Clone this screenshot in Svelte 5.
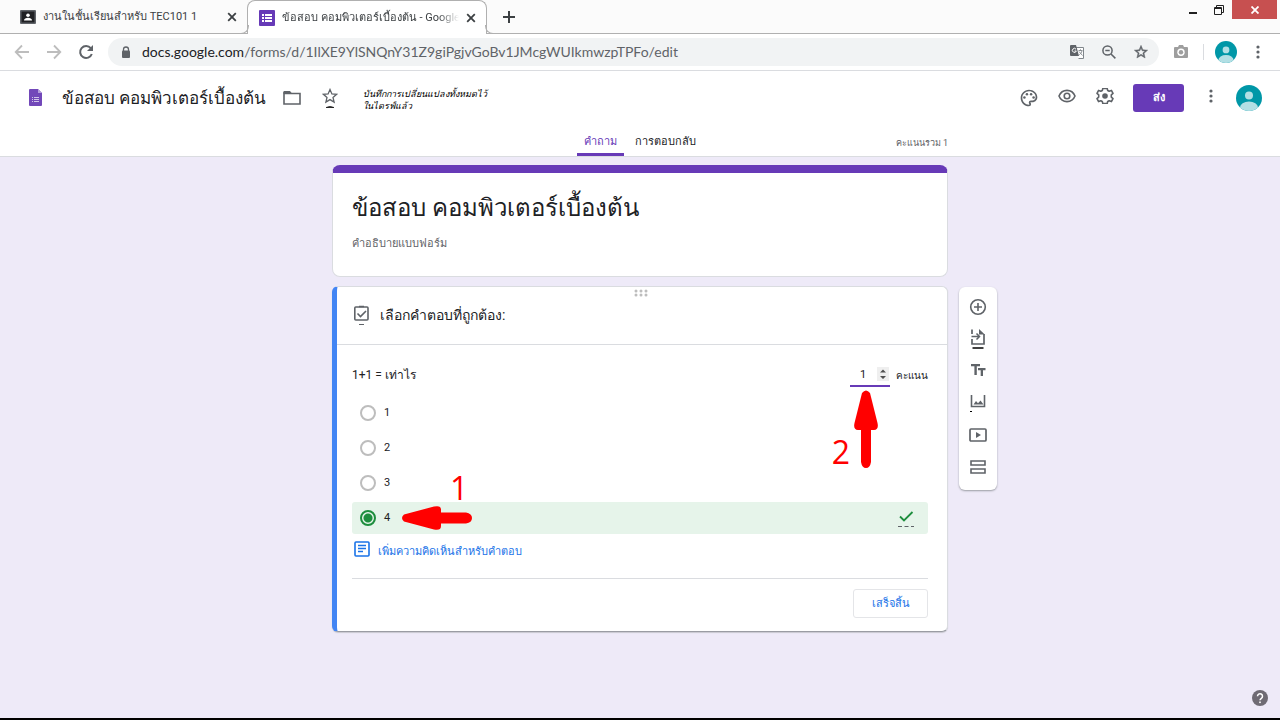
<script lang="ts">
  let answer = $state('4');
  let points = $state(1);
  const choices = ['1', '2', '3', '4'];
</script>

{#snippet avatar(size: number)}
  <svg width={size} height={size} viewBox="0 0 26 26" aria-hidden="true">
    <clipPath id="face{size}"><circle cx="13" cy="13" r="13" /></clipPath>
    <g clip-path="url(#face{size})">
      <rect width="26" height="26" fill="#0097a7" />
      <circle cx="13" cy="10.5" r="4" fill="#b2dfe4" />
      <ellipse cx="13" cy="22.5" rx="9" ry="6" fill="#b2dfe4" />
    </g>
  </svg>
{/snippet}

{#snippet dots()}
  <svg width="16" height="16" viewBox="0 0 16 16" fill="#5f6368" aria-hidden="true">
    <circle cx="8" cy="3" r="1.6" /><circle cx="8" cy="8" r="1.6" /><circle cx="8" cy="13" r="1.6" />
  </svg>
{/snippet}

{#snippet cross()}
  <svg width="10" height="10" viewBox="0 0 10 10" stroke="#3c4043" stroke-width="1.8" aria-hidden="true"><path d="M1.2 1.2l7.6 7.6M8.8 1.2L1.2 8.8" /></svg>
{/snippet}

<div class="page">
  <div class="strip">
    <div class="tab">
      <svg width="16" height="14" viewBox="0 0 16 14" aria-hidden="true">
        <rect width="16" height="14" rx="1" fill="#5f6368" /><rect x="1.5" y="1.5" width="13" height="11" fill="#202124" />
        <circle cx="8" cy="5.3" r="1.8" fill="#fff" /><path d="M4 10.5c0-3.6 8-3.6 8 0z" fill="#fff" />
      </svg>
      <span class="tab-name">งานในชั้นเรียนสำหรับ TEC101 1</span>
      <button class="plain" aria-label="ปิดแท็บ">{@render cross()}</button>
    </div>
    <div class="tab active">
      <svg width="16" height="16" viewBox="0 0 16 16" aria-hidden="true">
        <rect width="16" height="16" rx="1" fill="#673ab7" />
        <path d="M3 4h2v2H3zM6 4h7v2H6zM3 7h2v2H3zM6 7h7v2H6zM3 10h2v2H3zM6 10h7v2H6z" fill="#fff" />
      </svg>
      <span class="tab-name fade">ข้อสอบ คอมพิวเตอร์เบื้องต้น - Google</span>
      <button class="plain" aria-label="ปิดแท็บ">{@render cross()}</button>
    </div>
    <button class="plain add-tab" aria-label="แท็บใหม่">
      <svg width="12" height="12" viewBox="0 0 12 12" stroke="#3c4043" stroke-width="2"><path d="M6 0v12M0 6h12" /></svg>
    </button>
    <div class="window">
      <button class="plain" aria-label="ย่อ"><svg width="10" height="10" viewBox="0 0 10 10"><path d="M1 7h8v2H1z" fill="#202020" /></svg></button>
      <button class="plain" aria-label="คืนค่า"><svg width="10" height="10" viewBox="0 0 10 10" fill="none" stroke="#202020"><path d="M2.5 2V.5h7v7H8" /><path d="M.5 2.5h7v7h-7zM.5 3.5h7" /></svg></button>
      <button class="plain shut" aria-label="ปิด"><svg width="8" height="8" viewBox="0 0 8 8" stroke="#fff" stroke-width="1.8"><path d="M.5.5l7 7M7.5.5l-7 7" /></svg></button>
    </div>
  </div>

  <div class="toolbar">
    <div class="nav">
      <button class="plain" aria-label="กลับ"><svg width="16" height="16" viewBox="0 0 16 16" fill="none" stroke="#bdbdbd" stroke-width="1.8"><path d="M15 8H2M8 1.5L1.7 8 8 14.5" /></svg></button>
      <button class="plain" aria-label="ไปข้างหน้า"><svg width="16" height="16" viewBox="0 0 16 16" fill="none" stroke="#bdbdbd" stroke-width="1.8"><path d="M1 8h13M8 1.5L14.3 8 8 14.5" /></svg></button>
      <button class="plain" aria-label="โหลดใหม่"><svg width="16" height="16" viewBox="0 0 16 16"><path d="M12.8 4.2A6 6 0 1 0 13.8 10" fill="none" stroke="#5f6368" stroke-width="2" /><path d="M15 1v6H9z" fill="#5f6368" /></svg></button>
    </div>
    <div class="omnibox">
      <svg width="10" height="13" viewBox="0 0 10 13" aria-hidden="true"><path d="M2.500 5V3.500a2.500 2.500 0 0 1 5 0V5" fill="none" stroke="#5f6368" stroke-width="1.300" /><rect x="1" y="4.500" width="8" height="7.500" rx="1" fill="#5f6368" /></svg>
      <span class="url"><b>docs.google.com</b>/forms/d/1IlXE9YlSNQnY31Z9giPgjvGoBv1JMcgWUIkmwzpTPFo/edit</span>
      <button class="plain" aria-label="แปลหน้านี้">
        <svg width="14" height="14" viewBox="0 0 14 14"><path d="M5.500 2.500h8v11h-5" fill="#fff" stroke="#80868b" /><path d="M1 0h5l3 11H1a1 1 0 0 1-1-1V1a1 1 0 0 1 1-1z" fill="#5f6368" /><path d="M6 4.200A2 2 0 1 0 6.300 6H4.500" fill="none" stroke="#fff" /><path d="M8.500 5.500h4M10.500 4.300v1.200M12 5.800c-.4 2-1.500 3-2.700 4M9 6.500l3.500 4" fill="none" stroke="#80868b" stroke-width=".9" /></svg>
      </button>
      <button class="plain" aria-label="ซูม"><svg width="14" height="14" viewBox="0 0 14 14" fill="none" stroke="#5f6368" stroke-width="1.500"><circle cx="5.500" cy="5.500" r="4.600" /><path d="M9 9l4.400 4.400M3.300 5.500h4.400" /></svg></button>
      <button class="plain" aria-label="บุ๊กมาร์ก"><svg width="16" height="16" viewBox="0 0 24 24" fill="#5f6368"><path d="M22 9.240l-7.190-.62L12 2 9.190 8.630 2 9.240l5.460 4.730L5.820 21 12 17.270 18.180 21l-1.630-7.030L22 9.240zM12 15.400l-3.760 2.270 1-4.280-3.320-2.880 4.380-.38L12 6.100l1.710 4.040 4.380.38-3.320 2.880 1 4.280L12 15.400z" stroke="#5f6368" stroke-width=".7" /></svg></button>
    </div>
    <div class="chrome-end">
      <button class="plain" aria-label="กล้อง"><svg width="16" height="14" viewBox="0 0 16 14"><path d="M5 2l1-2h4l1 2h3a1 1 0 0 1 1 1v9a1 1 0 0 1-1 1H2a1 1 0 0 1-1-1V3a1 1 0 0 1 1-1z" fill="#9e9e9e" /><circle cx="8" cy="7.200" r="3.700" fill="#fff" /><circle cx="8" cy="7.200" r="2.200" fill="#9e9e9e" /></svg></button>
      <span class="rule"></span>
      <button class="plain" aria-label="โปรไฟล์">{@render avatar(22)}</button>
      <button class="plain menu" aria-label="เมนู">{@render dots()}</button>
    </div>
  </div>

  <header>
    <div class="bar">
      <svg width="13" height="18" viewBox="0 0 13 18" aria-hidden="true"><path d="M1 0h8l4 4v12a1 1 0 0 1-1 1H1a1 1 0 0 1-1-1V1a1 1 0 0 1 1-1z" fill="#7248b9" /><path d="M9 0l4 4H9z" fill="#b39ddb" /><path d="M3 8h1v1H3zM5 8h5v1H5zM3 10h1v1H3zM5 10h5v1H5zM3 12h1v1H3zM5 12h5v1H5z" fill="#d1c4e9" /></svg>
      <h1>ข้อสอบ คอมพิวเตอร์เบื้องต้น</h1>
      <button class="plain tool" aria-label="ย้าย"><svg width="18" height="14" viewBox="0 0 18 14"><path d="M1 2.500h16v10.500H1z" fill="none" stroke="#5f6368" stroke-width="1.600" /><path d="M1 0h6l2 2.500H.2V1z" fill="#5f6368" /></svg></button>
      <button class="plain tool" aria-label="ติดดาว"><svg width="16" height="20" viewBox="0 0 16 20"><path d="M8 1.500l1.900 4.400 4.700.4-3.600 3.100 1.100 4.700L8 11.600l-4.100 2.500L5 9.400 1.400 6.300l4.700-.4z" fill="none" stroke="#5f6368" stroke-width="1.300" /><path d="M4 19.500q4-2 8 0z" fill="#000" stroke="#000" stroke-width=".6" /></svg></button>
      <p class="saved">บันทึกการเปลี่ยนแปลงทั้งหมดไว้<br />ในไดรฟ์แล้ว</p>
      <div class="actions">
        <button class="plain tool" aria-label="ธีม"><svg width="20" height="20" viewBox="0 0 24 24" fill="#5f6368"><path d="M12 22C6.490 22 2 17.510 2 12S6.490 2 12 2s10 4.040 10 9c0 3.310-2.690 6-6 6h-1.770c-.28 0-.5.22-.5.5 0 .12.050.230.130.330.410.470.640 1.060.640 1.670A2.500 2.500 0 0 1 12 22zm0-18c-4.410 0-8 3.590-8 8s3.590 8 8 8c.28 0 .5-.22.5-.5a.54.54 0 0 0-.14-.35c-.41-.46-.63-1.050-.63-1.650a2.500 2.500 0 0 1 2.500-2.500H16c2.210 0 4-1.790 4-4 0-3.860-3.590-7-8-7z" /><circle cx="6.500" cy="11.500" r="1.500" /><circle cx="9.500" cy="7.500" r="1.500" /><circle cx="14.500" cy="7.500" r="1.500" /><circle cx="17.500" cy="11.500" r="1.500" /></svg></button>
        <button class="plain tool raised" aria-label="ดูตัวอย่าง"><svg width="18" height="14" viewBox="0 0 18 14" fill="none" stroke="#5f6368" stroke-width="1.600"><path d="M1 7c3-7.500 13-7.500 16 0-3 7.500-13 7.500-16 0z" /><circle cx="9" cy="7" r="2.800" /></svg></button>
        <button class="plain tool raised" aria-label="การตั้งค่า"><svg width="18" height="16" viewBox="0 1 18 16"><path d="M6.800 1.500h4.400l.5 2 1.500.8 2.200-.9 1.600 3-1.700 1.500v2.200l1.700 1.500-1.600 3-2.200-.9-1.500.8-.5 2H6.800l-.5-2-1.500-.8-2.200.9L1 11.600l1.700-1.500V7.900L1 6.400l1.600-3 2.200.9 1.500-.8z" fill="none" stroke="#5f6368" stroke-width="1.600" stroke-linejoin="round" /><circle cx="9" cy="9" r="2.800" fill="#5f6368" /></svg></button>
        <button class="send">ส่ง</button>
        <button class="plain tool raised" aria-label="เพิ่มเติม">{@render dots()}</button>
        <button class="plain tool" aria-label="บัญชี">{@render avatar(26)}</button>
      </div>
    </div>
    <div class="tabs">
      <nav>
        <a href="#questions" class="current">คำถาม</a>
        <a href="#responses">การตอบกลับ</a>
      </nav>
      <span class="total">คะแนนรวม 1</span>
    </div>
  </header>

  <main>
    <div class="column">
      <section class="card intro">
        <h2>ข้อสอบ คอมพิวเตอร์เบื้องต้น</h2>
        <p>คำอธิบายแบบฟอร์ม</p>
      </section>

      <section class="card question">
        <svg class="grip" width="16" height="8" viewBox="0 0 16 8" fill="#bdbdbd" aria-hidden="true"><circle cx="2" cy="2" r="1.500" /><circle cx="7" cy="2" r="1.500" /><circle cx="12" cy="2" r="1.500" /><circle cx="2" cy="6" r="1.500" /><circle cx="7" cy="6" r="1.500" /><circle cx="12" cy="6" r="1.500" /></svg>
        <div class="lead">
          <svg width="18" height="20" viewBox="0 0 18 20" fill="none" stroke="#5f6368" aria-hidden="true"><rect x="2.800" y="2" width="13.200" height="13" rx="1" stroke-width="1.600" /><path d="M5.500 8.500l3 3L14 6" stroke-width="1.600" /><path d="M7 1.500h5" stroke-width="1.500" /><path d="M7 19.500h5" /></svg>
          <h3>เลือกคำตอบที่ถูกต้อง:</h3>
        </div>
        <div class="body">
          <div class="prompt">
            <span id="prompt">1+1 = เท่าไร</span>
            <label class="score"><input type="number" bind:value={points} min="0" /><span>คะแนน</span></label>
          </div>
          <div class="choices" role="radiogroup" aria-labelledby="prompt">
            {#each choices as choice}
              <label class="choice" class:correct={answer === choice}>
                <input type="radio" name="answer" value={choice} bind:group={answer} />
                <span>{choice}</span>
                {#if answer === choice}
                  <svg width="18" height="18" viewBox="0 0 18 18" fill="none" aria-hidden="true"><path d="M3 7.500l4 4L15.500 3" stroke="#1e8e3e" stroke-width="1.800" /><path d="M1 17.500h16" stroke="#5f6368" stroke-dasharray="4 2.500" /></svg>
                {/if}
              </label>
            {/each}
          </div>
          <button class="plain feedback">
            <svg width="16" height="16" viewBox="0 0 16 16" fill="none" stroke="#1a73e8" stroke-width="1.600" aria-hidden="true"><rect x="1" y="1" width="14" height="14" rx="1" /><path d="M4 4.500h8M4 7.500h8M4 10.500h5" /></svg>
            <span>เพิ่มความคิดเห็นสำหรับคำตอบ</span>
          </button>
          <div class="foot"><button class="done">เสร็จสิ้น</button></div>
        </div>

        <div class="mark choose">
          <span>1</span>
          <svg width="70" height="24" viewBox="0 0 70 24" fill="red" aria-hidden="true"><path d="M2 8.500L32 .5q7-1.500 7 3V6.500h25q6 1 6 5.500t-6 5.500H39V20q0 5-7 3.500L2 15.500q-4-3.500 0-7z" /></svg>
        </div>
        <div class="mark grade">
          <span>2</span>
          <svg width="24" height="78" viewBox="0 0 24 78" fill="red" aria-hidden="true"><path d="M8 3q4-5 8 0l7.500 30q1.500 7-3.500 7H17v32q-1 6-5 6t-5-6V40H4q-5 0-3.500-7z" /></svg>
        </div>
      </section>
    </div>

    <aside>
      <button class="plain" aria-label="เพิ่มคำถาม"><svg width="18" height="18" viewBox="0 0 18 18" fill="none" stroke="#5f6368" stroke-width="1.600"><circle cx="9" cy="9" r="7.300" /><path d="M9 5v8M5 9h8" /></svg></button>
      <button class="plain" aria-label="นำเข้าคำถาม"><svg width="18" height="22" viewBox="0 0 18 22"><path d="M3 1.500v4.500M3 11v5h12V6" fill="none" stroke="#5f6368" stroke-width="1.700" /><path d="M10 1l5.800 5.500H10z" fill="#5f6368" /><path d="M2.500 8.500h7M7.500 5.500l3 3-3 3" fill="none" stroke="#5f6368" stroke-width="1.500" /><path d="M3.500 20h11" stroke="#000" stroke-width="1.500" /></svg></button>
      <button class="plain" aria-label="เพิ่มชื่อ"><svg width="18" height="18" viewBox="0 0 18 18" fill="#5f6368"><path d="M2 2h9v2.300H7.800V13H5.400V4.300H2zM9 6h7.500v2.300H14V14h-2.300V8.300H9z" /></svg></button>
      <button class="plain" aria-label="เพิ่มรูปภาพ"><svg width="18" height="18" viewBox="0 0 18 18"><path d="M2.500 1v11.500h13V1" fill="none" stroke="#5f6368" stroke-width="1.600" /><path d="M4.500 10.500l2.500-3.500 2 2.300 2.500-2.800 3 4z" fill="#5f6368" /><path d="M1 17h2v1H1z" /></svg></button>
      <button class="plain" aria-label="เพิ่มวิดีโอ"><svg width="18" height="18" viewBox="0 0 18 18"><rect x="1" y="3" width="16" height="12" rx="1" fill="none" stroke="#5f6368" stroke-width="1.700" /><path d="M7 6l5 3-5 3z" fill="#5f6368" /></svg></button>
      <button class="plain" aria-label="เพิ่มส่วน"><svg width="18" height="18" viewBox="0 0 18 18" fill="none" stroke="#5f6368" stroke-width="1.600"><path d="M2 3h14v4H2zM2 11h14v4H2z" /></svg></button>
    </aside>
    <button class="plain help" aria-label="ความช่วยเหลือ"><svg width="16" height="16" viewBox="0 0 16 16"><circle cx="8" cy="8" r="8" fill="#6f6b74" /><path d="M5.500 6.300a2.500 2.500 0 1 1 3.900 2c-1 .7-1.400 1-1.400 2" fill="none" stroke="#fff" stroke-width="1.500" /><rect x="7.200" y="11.500" width="1.600" height="1.600" fill="#fff" /></svg></button>
  </main>
</div>

<style>
  :global(body) { margin: 0; }
  .page {
    --ink: #202124;
    --grey: #5f6368;
    --line: #dadce0;
    --purple: #673ab7;
    display: flex; flex-direction: column; min-height: 100vh; box-sizing: border-box;
    border-bottom: 2px solid #000; background: #eeeaf8; color: var(--ink);
    font: 11px/16px Roboto, "Noto Sans", sans-serif;
  }
  .page :global(*) { box-sizing: border-box; }
  h1, h2, h3, p { margin: 0; font-weight: 400; }
  svg { flex: none; display: block; }
  .plain { display: flex; align-items: center; justify-content: center; flex: none; padding: 0; border: 0; background: none; color: inherit; font: inherit; }

  .strip { display: flex; height: 34px; background: #fbfbfb; border-bottom: 1px solid #b0b0b0; }
  .tab { display: flex; align-items: center; gap: 7px; width: 247px; padding: 0 10px 0 20px; color: #3c4043; }
  .tab-name { flex: 1; min-width: 0; overflow: hidden; white-space: nowrap; line-height: 26px; }
  .active { position: relative; width: 240px; height: 34px; padding: 0 10px 0 11px; background: #fff; border: 1px solid #b0b0b0; border-bottom: 0; border-radius: 8px 8px 0 0; }
  .active::before, .active::after { content: ""; position: absolute; bottom: 0; width: 8px; height: 8px; border-bottom: 1px solid #b0b0b0; }
  .active::before { left: -8px; border-right: 1px solid #b0b0b0; border-bottom-right-radius: 8px; }
  .active::after { right: -8px; border-left: 1px solid #b0b0b0; border-bottom-left-radius: 8px; }
  .fade { mask-image: linear-gradient(to right, #000 88%, transparent); }
  .add-tab { width: 44px; }
  .window { display: flex; gap: 16px; height: 19px; margin: 0 3px 0 auto; }
  .shut { width: 45px; margin-left: -8px; background: #c75050; }

  .toolbar { display: flex; align-items: center; height: 37px; background: #fff; border-bottom: 1px solid var(--line); }
  .nav { display: flex; padding: 0 6px; }
  .nav button, .omnibox button { width: 32px; height: 28px; }
  .omnibox { display: flex; align-items: center; flex: 1; min-width: 0; height: 28px; padding: 0 2px 0 13px; border-radius: 14px; background: #f1f3f4; }
  .url { flex: 1; min-width: 0; overflow: hidden; white-space: nowrap; margin-left: 11px; color: var(--grey); font: 14px/20px Lato, "Noto Sans", sans-serif; }
  .url b { font-weight: 400; color: var(--ink); }
  .chrome-end { display: flex; align-items: center; padding-right: 12px; }
  .chrome-end button { width: 44px; height: 28px; }
  .chrome-end .menu { width: 20px; }
  .rule { width: 1px; height: 16px; background: var(--line); }

  header { background: #fff; border-bottom: 1px solid var(--line); }
  .bar { display: flex; align-items: center; height: 54px; padding: 0 12px 0 29px; }
  h1 { margin: 0 7px 0 20px; font-size: 17px; line-height: 28px; }
  .tool { width: 38px; height: 32px; }
  .raised { padding-bottom: 4px; }
  .saved { margin: 4px 0 0 14px; font-size: 9px; font-style: italic; line-height: 12px; color: #000; }
  .actions { display: flex; align-items: center; margin-left: auto; }
  .send { width: 51px; height: 28px; margin: 0 8px 0 9px; padding: 0; border: 0; border-radius: 3px; background: var(--purple); color: #fff; font: 700 11px/20px Roboto, "Noto Sans", sans-serif; }
  .tabs { display: grid; grid-template-columns: 1fr auto 1fr; width: min(616px, 100%); height: 31px; margin: 0 auto; }
  nav { grid-column: 2; display: flex; gap: 4px; }
  nav a { display: flex; align-items: center; padding: 6px 7px 0; border-bottom: 3px solid transparent; border-radius: 2px 2px 0 0; color: var(--ink); text-decoration: none; }
  nav .current { border-bottom-color: var(--purple); color: var(--purple); }
  .total { justify-self: end; align-self: center; color: var(--grey); font-size: 9px; padding-top: 4px; }

  main { flex: 1; display: grid; grid-template-columns: 1fr minmax(0, 616px) 1fr; padding: 8px 0; position: relative; }
  .column { grid-column: 2; display: flex; flex-direction: column; gap: 9px; }
  .card { position: relative; background: #fff; border: 1px solid var(--line); border-radius: 8px; }
  .intro { padding: 16px 19px 22px; border-top: 8px solid var(--purple); }
  h2 { font-size: 24px; line-height: 38px; }
  .intro p { margin-top: 7px; color: var(--grey); line-height: 20px; }
  .question { border-left: 5px solid #4285f4; border-bottom: 1px solid #9a9ca3; border-radius: 6px; box-shadow: 0 1px 1px #c8c8d0; }
  .grip { margin: 2px auto 0; }
  .lead { display: flex; align-items: center; gap: 10px; height: 48px; padding: 0 16px 12px 15px; border-bottom: 1px solid var(--line); }
  h3 { font-size: 14px; line-height: 24px; }
  .body { padding: 16px 19px 13px 15px; }
  .prompt { display: flex; justify-content: space-between; height: 28px; font-size: 12px; line-height: 28px; }
  .score { display: flex; gap: 6px; font-size: 10px; line-height: 30px; }
  .score input { width: 40px; height: 24px; margin: 2px 0 0; padding: 0 1px 0 10px; border: 0; border-bottom: 2px solid var(--purple); border-radius: 0; outline: 0; background: none; color: var(--ink); font: 11px/16px Roboto, sans-serif; }
  .score input::-webkit-inner-spin-button {
    appearance: none; opacity: 1; width: 12px; height: 14px;
    background: #efefef url("data:image/svg+xml,%3Csvg xmlns='http://www.w3.org/2000/svg' width='12' height='14'%3E%3Cpath d='M3 5.500h6L6 2.500zM3 9h6l-3 3z' fill='%23505050'/%3E%3C/svg%3E") no-repeat center;
  }
  .choices { display: flex; flex-direction: column; gap: 3px; margin-top: 8px; }
  .choice { display: flex; align-items: center; gap: 8px; height: 32px; padding: 0 13px 0 8px; border-radius: 3px; }
  .choice input { appearance: none; flex: none; width: 16px; height: 16px; margin: 0; border: 2px solid #bdbdbd; border-radius: 50%; }
  .choice svg { margin-left: auto; }
  .correct { background: #e6f4ea; }
  .correct input { border-color: #1e8e3e; background: radial-gradient(circle, #1e8e3e 4px, transparent 5px); }
  .feedback { align-items: start; gap: 8px; margin: 7px 0 0 2px; height: 24px; color: #1a73e8; line-height: 22px; }
  .foot { display: flex; justify-content: end; margin-top: 13px; padding-top: 10px; border-top: 1px solid var(--line); }
  .done { width: 75px; height: 29px; padding: 0; border: 1px solid #e4e5e8; border-radius: 3px; background: #fff; color: #1a73e8; font: 500 11px/20px Roboto, "Noto Sans", sans-serif; }

  .mark { position: absolute; color: red; font: 32px/32px "Open Sans", sans-serif; pointer-events: none; }
  .choose { left: 65px; top: 185px; }
  .choose span { display: block; padding-left: 48px; height: 34px; }
  .grade { display: flex; align-items: end; gap: 4px; right: 69px; top: 103px; }

  aside { display: flex; flex-direction: column; width: 38px; margin: 122px 0 0 11px; padding: 4px 0 7px; align-self: start; background: #fff; border-radius: 6px; box-shadow: 0 1px 2px #9a9ca3; }
  aside button { height: 32px; }
  .help { position: absolute; right: 12px; bottom: 12px; }
</style>
